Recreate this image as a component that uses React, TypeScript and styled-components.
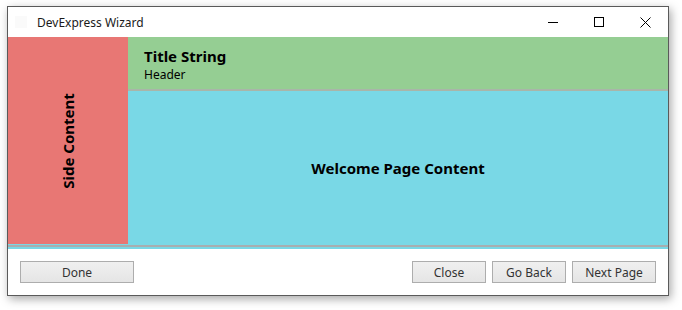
import styled, { createGlobalStyle } from "styled-components";

const GlobalStyle = createGlobalStyle`
  html, body {
    margin: 0;
    padding: 0;
    background: #ffffff;
    width: 682px;
    height: 310px;
    overflow: hidden;
  }
  body {
    font-family: "Noto Sans", "Open Sans", sans-serif;
    color: #000;
  }
`;

const Page = styled.div`
  padding: 6px 0 0 7px;
`;

const Window = styled.div`
  width: 662px;
  height: 290px;
  box-sizing: border-box;
  border: 1px solid #5a5a5a;
  background: #ffffff;
  box-shadow: 2px 3px 9px rgba(0, 0, 0, 0.35);
  display: flex;
  flex-direction: column;
`;

const TitleBar = styled.div`
  height: 30px;
  display: flex;
  align-items: center;
  background: #ffffff;
`;

const AppIcon = styled.div`
  width: 12px;
  height: 12px;
  margin: 0 10px 0 7px;
  background: #fafafa;
`;

const Caption = styled.div`
  flex: 1;
  font-size: 12px;
  color: #1a1a1a;
`;

const CaptionButton = styled.div`
  width: 46px;
  height: 30px;
  display: flex;
  align-items: center;
  justify-content: center;
`;

const Body = styled.div`
  height: 212px;
  background: #79d8e6;
  display: flex;
  flex-direction: column;
`;

const Row = styled.div`
  height: 207px;
  display: flex;
`;

const Side = styled.div`
  width: 120px;
  background: #e87774;
  display: flex;
  align-items: center;
  justify-content: center;
`;

const SideLabel = styled.div`
  transform: rotate(-90deg);
  white-space: nowrap;
  font-size: 15px;
  font-weight: 700;
`;

const Main = styled.div`
  flex: 1;
  display: flex;
  flex-direction: column;
`;

const Header = styled.div`
  height: 54px;
  box-sizing: border-box;
  background: #95ce93;
  border-bottom: 2px solid #a9b5a9;
  padding: 9px 16px 0;
`;

const HeaderTitle = styled.div`
  font-size: 15px;
  font-weight: 700;
  line-height: 20px;
`;

const HeaderSub = styled.div`
  margin-top: 1px;
  font-size: 12px;
  line-height: 16px;
`;

const Content = styled.div`
  flex: 1;
  display: flex;
  align-items: center;
  justify-content: center;
  font-size: 15px;
  font-weight: 700;
`;

const Separator = styled.div`
  margin-top: 1px;
  height: 2px;
  background: #a8aeb0;
`;

const Footer = styled.div`
  flex: 1;
  display: flex;
  align-items: center;
  gap: 6px;
  padding: 0 12px 0 12px;
`;

const Spacer = styled.div`
  flex: 1;
`;

const Button = styled.button<{ $w: number }>`
  width: ${(p) => p.$w}px;
  height: 22px;
  box-sizing: border-box;
  border: 1px solid #adadad;
  background: linear-gradient(#f0f0f0, #e5e5e5);
  font-family: "Noto Sans", "Open Sans", sans-serif;
  font-size: 12px;
  color: #333;
  padding: 0;
  display: flex;
  align-items: center;
  justify-content: center;
`;

export default function App() {
  return (
    <>
      <GlobalStyle />
      <Page>
        <Window>
          <TitleBar>
            <AppIcon />
            <Caption>DevExpress Wizard</Caption>
            <CaptionButton>
              <svg width="10" height="10" viewBox="0 0 10 10">
                <path d="M0 5.5H10" stroke="#000" strokeWidth="1" />
              </svg>
            </CaptionButton>
            <CaptionButton>
              <svg width="10" height="10" viewBox="0 0 10 10">
                <rect x="0.5" y="0.5" width="9" height="9" fill="none" stroke="#000" strokeWidth="1" />
              </svg>
            </CaptionButton>
            <CaptionButton>
              <svg width="11" height="11" viewBox="0 0 11 11">
                <path d="M0.5 0.5L10.5 10.5M10.5 0.5L0.5 10.5" stroke="#000" strokeWidth="1" />
              </svg>
            </CaptionButton>
          </TitleBar>
          <Body>
            <Row>
              <Side>
                <SideLabel>Side Content</SideLabel>
              </Side>
              <Main>
                <Header>
                  <HeaderTitle>Title String</HeaderTitle>
                  <HeaderSub>Header</HeaderSub>
                </Header>
                <Content>Welcome Page Content</Content>
              </Main>
            </Row>
            <Separator />
          </Body>
          <Footer>
            <Button $w={114}>Done</Button>
            <Spacer />
            <Button $w={74}>Close</Button>
            <Button $w={74}>Go Back</Button>
            <Button $w={84}>Next Page</Button>
          </Footer>
        </Window>
      </Page>
    </>
  );
}
